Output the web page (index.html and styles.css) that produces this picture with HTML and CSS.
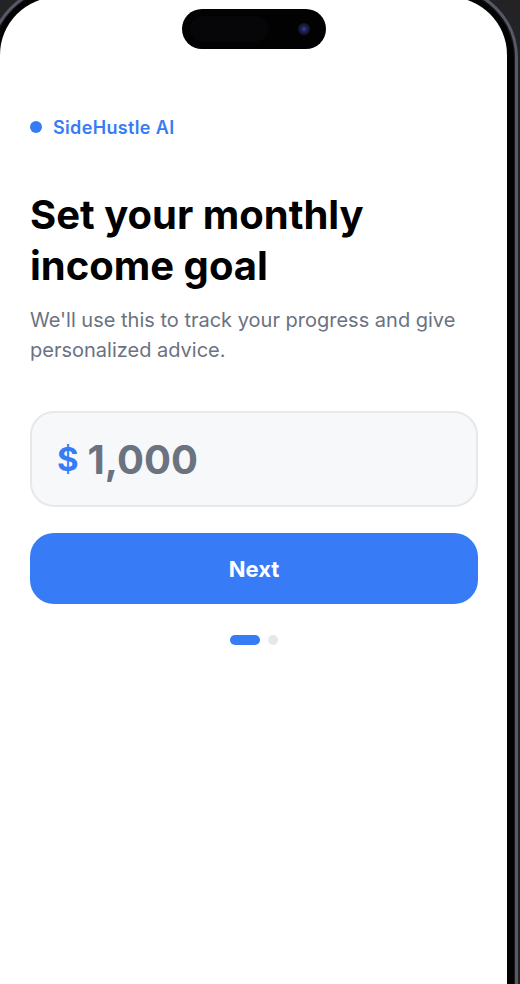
FILE: index.html
```html
<!DOCTYPE html>
<html lang="en">
<head>
<meta charset="utf-8">
<title>SideHustle AI – Income goal</title>
<link rel="stylesheet" href="styles.css">
</head>
<body>
<div class="device">
  <div class="screen">
    <div class="island">
      <div class="island-sensor"></div>
      <div class="island-camera"></div>
    </div>
    <div class="brand">
      <span class="brand-dot"></span>
      <span class="brand-name">SideHustle AI</span>
    </div>
    <h1 class="title">Set your monthly income goal</h1>
    <p class="subtitle">We'll use this to track your progress and give personalized advice.</p>
    <div class="amount-field">
      <span class="currency">$</span>
      <span class="amount">1,000</span>
    </div>
    <button class="next-btn" type="button">Next</button>
    <div class="pager">
      <span class="pager-dot active"></span>
      <span class="pager-dot"></span>
    </div>
  </div>
</div>
</body>
</html>
```

FILE: styles.css
```css
* { box-sizing: border-box; }

html, body {
  margin: 0;
  padding: 0;
}

body {
  width: 520px;
  height: 984px;
  overflow: hidden;
  background: #232325;
  font-family: Inter, "Noto Sans", "Liberation Sans", sans-serif;
}

.device {
  width: 529px;
  height: 1100px;
  margin: -14px 0 0 -11px;
  padding: 8px;
  background: #030303;
  border: 3px solid #555a66;
  border-radius: 72px;
  box-shadow: inset 0 0 0 1px #1a1a1d;
}

.screen {
  width: 507px;
  height: 1070px;
  background: #ffffff;
  border-radius: 58px;
  padding: 12px 29px 0 30px;
  display: flex;
  flex-direction: column;
}

.island {
  align-self: center;
  margin-left: -1px;
  width: 144px;
  height: 40px;
  border-radius: 20px;
  background: #020203;
  display: flex;
  align-items: center;
  padding: 0 10px 0 8px;
  gap: 30px;
}

.island-sensor {
  width: 78px;
  height: 26px;
  border-radius: 13px;
  background: #060608;
}

.island-camera {
  width: 12px;
  height: 12px;
  border-radius: 50%;
  background: radial-gradient(circle at 50% 50%, #3a3f8c 0, #1b1d4a 40%, #08080c 100%);
}

.brand {
  margin-top: 68px;
  display: flex;
  align-items: center;
  gap: 11px;
  height: 20px;
}

.brand-dot {
  width: 12px;
  height: 12px;
  border-radius: 50%;
  background: #377cf6;
}

.brand-name {
  color: #377cf6;
  font-size: 18px;
  font-weight: 600;
  letter-spacing: 0.35px;
}

.title {
  margin: 52px 0 0;
  font-size: 40px;
  line-height: 51px;
  font-weight: 700;
  color: #000000;
  max-width: 420px;
}

.subtitle {
  margin: 14px 0 0;
  font-size: 20px;
  line-height: 30px;
  color: #6b7280;
  font-weight: 400;
}

.amount-field {
  margin-top: 46px;
  height: 96px;
  border: 2px solid #e6e8ec;
  border-radius: 24px;
  background: #f7f8fa;
  display: flex;
  align-items: center;
  gap: 9px;
  padding-left: 25px;
}

.currency {
  color: #377cf6;
  font-size: 33px;
  font-weight: 700;
}

.amount {
  color: #6b7280;
  font-size: 40px;
  font-weight: 700;
}

.next-btn {
  margin-top: 26px;
  height: 71px;
  width: 100%;
  border: none;
  border-radius: 24px;
  background: #377cf6;
  color: #ffffff;
  font-family: inherit;
  font-size: 22px;
  font-weight: 700;
}

.pager {
  margin-top: 31px;
  display: flex;
  justify-content: center;
  gap: 8px;
}

.pager-dot {
  width: 10px;
  height: 10px;
  border-radius: 5px;
  background: #e5e7eb;
}

.pager-dot.active {
  width: 30px;
  background: #377cf6;
}
```
